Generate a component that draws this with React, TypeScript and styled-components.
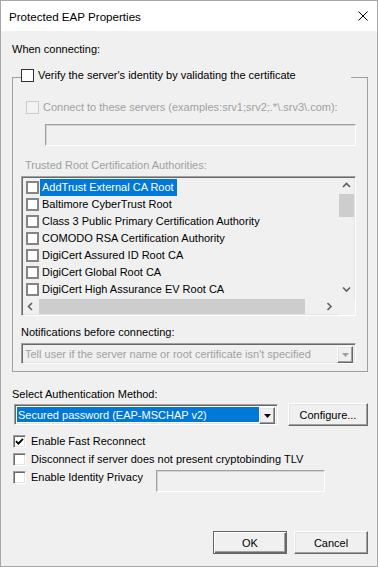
import React from 'react'
import styled, { createGlobalStyle, css } from 'styled-components'

const GlobalStyle = createGlobalStyle`
  html, body {
    margin: 0;
    padding: 0;
    background: #f0f0f0;
  }

  * {
    box-sizing: border-box;
  }
`

const sunken = css`
  border-style: solid;
  border-width: 1px;
  border-color: #a0a0a0 #ffffff #ffffff #a0a0a0;
  box-shadow: inset 1px 1px 0 #696969, inset -1px -1px 0 #e3e3e3;
`

const raised = css`
  border-style: solid;
  border-width: 1px;
  border-color: #ffffff #696969 #696969 #ffffff;
  box-shadow: inset -1px -1px 0 #a0a0a0, inset 1px 1px 0 #e3e3e3;
`

const Window = styled.div`
  width: 378px;
  height: 567px;
  border: 1px solid #a8a8a8;
  background: #f0f0f0;
  display: flex;
  flex-direction: column;
  overflow: hidden;
  font-family: 'Liberation Sans', Arial, sans-serif;
  font-size: 11px;
  color: #000;
`

const TitleBar = styled.div`
  height: 30px;
  flex: none;
  background: #ffffff;
  display: flex;
  align-items: center;
  justify-content: space-between;
  padding: 0 9px 0 8px;
`

const Title = styled.span`
  font-size: 11.6px;
  color: #000;
`

const Body = styled.div`
  flex: 1;
  display: flex;
  flex-direction: column;
  align-items: flex-start;
  padding: 12px 9px 12px 11px;
`

const Caption = styled.div<{ $top?: number; $indent?: number; $disabled?: boolean }>`
  height: 13px;
  line-height: 13px;
  white-space: nowrap;
  margin-top: ${p => p.$top ?? 0}px;
  margin-left: ${p => p.$indent ?? 0}px;
  color: ${p => (p.$disabled ? '#a0a0a0' : '#000')};
`

const Group = styled.fieldset`
  margin: 13px 0 0;
  padding: 0 12px 7px 8px;
  width: 356px;
  min-width: 0;
  border: 1px solid #a0a0a0;
  display: flex;
  flex-direction: column;
  align-items: flex-start;
`

const GroupLegend = styled.legend`
  width: 330px;
  padding: 0 0 3px;
  margin: 0;
  display: flex;
  align-items: flex-start;
  gap: 4px;
  line-height: 13px;
`

const CheckRow = styled.label<{ $top?: number; $indent?: number; $disabled?: boolean }>`
  display: flex;
  align-items: center;
  height: 13px;
  line-height: 13px;
  white-space: nowrap;
  margin-top: ${p => p.$top ?? 0}px;
  margin-left: ${p => p.$indent ?? 0}px;
  color: ${p => (p.$disabled ? '#a0a0a0' : '#000')};
`

const CheckText = styled.span<{ $gap: number; $width?: number }>`
  margin-left: ${p => p.$gap}px;
  width: ${p => (p.$width ? `${p.$width}px` : 'auto')};
`

type BoxKind = 'flat' | 'flatOff' | 'list' | 'sunken'

const Box = styled.span<{ $kind: BoxKind }>`
  flex: none;
  width: 13px;
  height: 13px;
  display: inline-flex;
  align-items: center;
  justify-content: center;
  background: #ffffff;
  ${p =>
    p.$kind === 'flat' &&
    css`
      border: 1px solid #333333;
    `}
  ${p =>
    p.$kind === 'flatOff' &&
    css`
      border: 1px solid #cccccc;
      background: #f3f3f3;
    `}
  ${p =>
    p.$kind === 'list' &&
    css`
      border: 2px solid #858585;
    `}
  ${p => p.$kind === 'sunken' && sunken}
`

const TextBox = styled.div<{ $top?: number; $indent?: number; $width: number; $height: number }>`
  flex: none;
  width: ${p => p.$width}px;
  height: ${p => p.$height}px;
  margin-top: ${p => p.$top ?? 0}px;
  margin-left: ${p => p.$indent ?? 0}px;
  background: #f0f0f0;
  border-style: solid;
  border-width: 1px;
  border-color: #a0a0a0 #ffffff #ffffff #a0a0a0;
  box-shadow: inset 1px 1px 0 #d4d4d4;
`

const ListBox = styled.div`
  margin-top: 4px;
  width: 335px;
  height: 140px;
  ${sunken};
  display: grid;
  grid-template-columns: 1fr 17px;
  grid-template-rows: 1fr 17px;
  background: #f0f0f0;
`

const ListItems = styled.div`
  padding-top: 2px;
  overflow: hidden;
`

const ListRow = styled.div`
  height: 17px;
  display: flex;
  align-items: center;
  padding-left: 4px;
  white-space: nowrap;
`

const ItemText = styled.span<{ $selected?: boolean }>`
  height: 17px;
  line-height: 17px;
  margin-left: 1px;
  padding: 0 3px 0 2px;
  background: ${p => (p.$selected ? '#0078d7' : 'transparent')};
  color: ${p => (p.$selected ? '#ffffff' : '#000')};
`

const VScroll = styled.div`
  display: flex;
  flex-direction: column;
`

const HScroll = styled.div`
  display: flex;
`

const ArrowCell = styled.div`
  flex: none;
  width: 17px;
  height: 17px;
  display: flex;
  align-items: center;
  justify-content: center;
`

const Track = styled.div<{ $horizontal?: boolean }>`
  flex: 1;
  display: flex;
  flex-direction: ${p => (p.$horizontal ? 'row' : 'column')};
  padding: ${p => (p.$horizontal ? '1px 0' : '0 1px')};
`

const Thumb = styled.div<{ $horizontal?: boolean }>`
  background: #cdcdcd;
  ${p =>
    p.$horizontal
      ? css`
          width: 266px;
          height: 100%;
        `
      : css`
          height: 23px;
          width: 100%;
        `}
`

const Corner = styled.div`
  background: #f0f0f0;
`

const Combo = styled.div<{ $top?: number; $indent?: number; $width: number; $disabled?: boolean }>`
  flex: none;
  width: ${p => p.$width}px;
  height: 21px;
  margin-top: ${p => p.$top ?? 0}px;
  margin-left: ${p => p.$indent ?? 0}px;
  ${sunken};
  background: ${p => (p.$disabled ? '#f0f0f0' : '#ffffff')};
  display: flex;
  padding: 2px;
`

const ComboValue = styled.div<{ $selected?: boolean; $disabled?: boolean }>`
  flex: 1;
  min-width: 0;
  line-height: 17px;
  padding-left: 1px;
  white-space: nowrap;
  overflow: hidden;
  background: ${p => (p.$selected ? '#0078d7' : 'transparent')};
  color: ${p => (p.$selected ? '#ffffff' : p.$disabled ? '#a0a0a0' : '#000')};
`

const DropButton = styled.div`
  flex: none;
  width: 16px;
  height: 17px;
  ${raised};
  background: #f0f0f0;
  display: flex;
  align-items: center;
  justify-content: center;
`

const MethodRow = styled.div`
  margin-top: 2px;
  width: 100%;
  display: flex;
  align-items: center;
  justify-content: space-between;
`

const Button = styled.button<{ $width: number; $default?: boolean }>`
  flex: none;
  width: ${p => p.$width}px;
  height: 23px;
  margin: 0;
  padding: 0;
  font-family: 'Liberation Sans', Arial, sans-serif;
  font-size: 11px;
  color: #000;
  background: #f0f0f0;
  ${p =>
    p.$default
      ? css`
          border: 1px solid #646464;
          box-shadow: inset 1px 1px 0 #ffffff, inset -1px -1px 0 #696969, inset -2px -2px 0 #a0a0a0;
        `
      : raised}
`

const CheckList = styled.div`
  margin-top: 9px;
  margin-left: 1px;
  display: flex;
  flex-direction: column;
  gap: 5px;
`

const IdentityRow = styled.div`
  display: flex;
  align-items: flex-start;
`

const Footer = styled.div`
  margin-top: auto;
  width: 100%;
  display: flex;
  justify-content: flex-end;
  gap: 7px;
`

const Chevron = ({ dir }: { dir: 'up' | 'down' | 'left' | 'right' }) => {
  const points = {
    up: '1,5 4.5,1.5 8,5',
    down: '1,1.5 4.5,5 8,1.5',
    left: '5,1 1.5,4.5 5,8',
    right: '1.5,1 5,4.5 1.5,8',
  }[dir]
  const vertical = dir === 'up' || dir === 'down'
  return (
    <svg width={vertical ? 9 : 7} height={vertical ? 7 : 9} viewBox={vertical ? '0 0 9 7' : '0 0 7 9'}>
      <polyline points={points} fill="none" stroke="#606060" strokeWidth="1.6" />
    </svg>
  )
}

const Triangle = ({ color }: { color: string }) => (
  <svg width="7" height="4" viewBox="0 0 7 4">
    <polygon points="0,0 7,0 3.5,4" fill={color} />
  </svg>
)

const Check = () => (
  <svg width="9" height="9" viewBox="0 0 9 9">
    <polyline points="1,4.2 3.4,6.6 8,1.8" fill="none" stroke="#000" strokeWidth="1.8" />
  </svg>
)

const authorities = [
  'AddTrust External CA Root',
  'Baltimore CyberTrust Root',
  'Class 3 Public Primary Certification Authority',
  'COMODO RSA Certification Authority',
  'DigiCert Assured ID Root CA',
  'DigiCert Global Root CA',
  'DigiCert High Assurance EV Root CA',
]

export default function App() {
  return (
    <>
      <GlobalStyle />
      <Window>
        <TitleBar>
          <Title>Protected EAP Properties</Title>
          <svg width="10" height="10" viewBox="0 0 10 10">
            <path d="M0.5 0.5 L9.5 9.5 M9.5 0.5 L0.5 9.5" stroke="#000" strokeWidth="1" />
          </svg>
        </TitleBar>
        <Body>
          <Caption>When connecting:</Caption>
          <Group>
            <GroupLegend>
              <Box $kind="flat" />
              <span>Verify the server's identity by validating the certificate</span>
            </GroupLegend>

            <CheckRow $top={16} $indent={5} $disabled>
              <Box $kind="flatOff" />
              <CheckText $gap={4}>Connect to these servers (examples:srv1;srv2;.*\.srv3\.com):</CheckText>
            </CheckRow>
            <TextBox $top={10} $indent={24} $width={311} $height={22} />

            <Caption $top={13} $indent={4} $disabled>
              Trusted Root Certification Authorities:
            </Caption>
            <ListBox>
              <ListItems>
                {authorities.map((name, i) => (
                  <ListRow key={name}>
                    <Box $kind="list" />
                    <ItemText $selected={i === 0}>{name}</ItemText>
                  </ListRow>
                ))}
              </ListItems>
              <VScroll>
                <ArrowCell>
                  <Chevron dir="up" />
                </ArrowCell>
                <Track>
                  <Thumb />
                </Track>
                <ArrowCell>
                  <Chevron dir="down" />
                </ArrowCell>
              </VScroll>
              <HScroll>
                <ArrowCell>
                  <Chevron dir="left" />
                </ArrowCell>
                <Track $horizontal>
                  <Thumb $horizontal />
                </Track>
                <ArrowCell>
                  <Chevron dir="right" />
                </ArrowCell>
              </HScroll>
              <Corner />
            </ListBox>

            <Caption $top={10}>Notifications before connecting:</Caption>
            <Combo $top={4} $width={335} $disabled>
              <ComboValue $disabled>Tell user if the server name or root certificate isn't specified</ComboValue>
              <DropButton>
                <Triangle color="#a0a0a0" />
              </DropButton>
            </Combo>
          </Group>

          <Caption $top={16}>Select Authentication Method:</Caption>
          <MethodRow>
            <Combo $indent={2} $width={264}>
              <ComboValue $selected>Secured password (EAP-MSCHAP v2)</ComboValue>
              <DropButton>
                <Triangle color="#000" />
              </DropButton>
            </Combo>
            <Button $width={80}>Configure...</Button>
          </MethodRow>

          <CheckList>
            <CheckRow>
              <Box $kind="sunken">
                <Check />
              </Box>
              <CheckText $gap={5}>Enable Fast Reconnect</CheckText>
            </CheckRow>
            <CheckRow>
              <Box $kind="sunken" />
              <CheckText $gap={5}>Disconnect if server does not present cryptobinding TLV</CheckText>
            </CheckRow>
            <IdentityRow>
              <CheckRow>
                <Box $kind="sunken" />
                <CheckText $gap={5} $width={125}>
                  Enable Identity Privacy
                </CheckText>
              </CheckRow>
              <TextBox $top={-1} $width={169} $height={22} />
            </IdentityRow>
          </CheckList>

          <Footer>
            <Button $width={74} $default>
              OK
            </Button>
            <Button $width={74}>Cancel</Button>
          </Footer>
        </Body>
      </Window>
    </>
  )
}
